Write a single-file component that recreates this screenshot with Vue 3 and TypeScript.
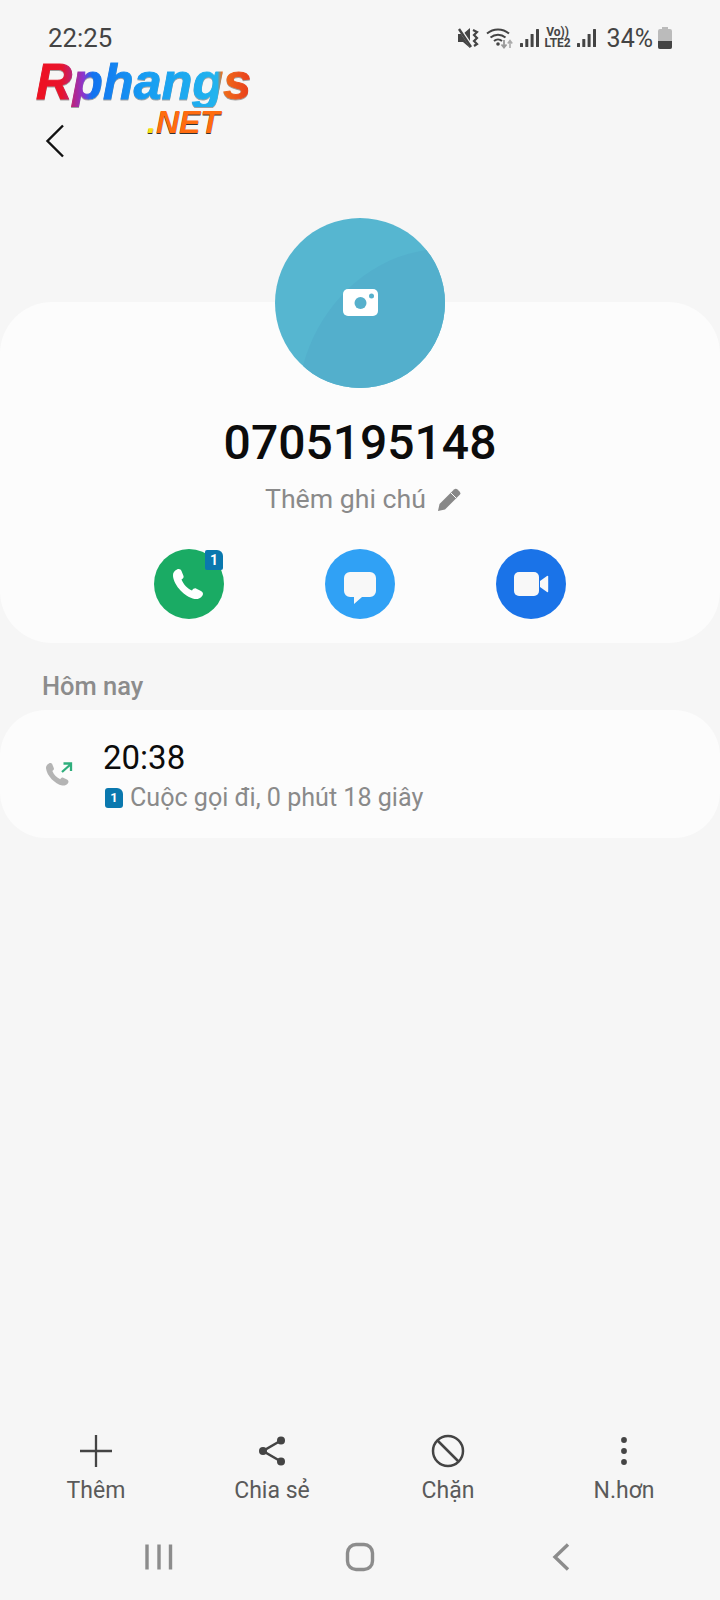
<script setup lang="ts">
// contact detail screen for an unsaved number
const bottomActions = ['add', 'share', 'block', 'more'] as const;
const labels: Record<string, string> = {
  add: 'Thêm',
  share: 'Chia sẻ',
  block: 'Chặn',
  more: 'N.hơn',
};
// handset outline, shared by the call button and the log row
const handset =
  'M23 20.500c2-1 4 0 4.500 1.500l2 5c.5 1.500-.5 2.500-2 3.500c2 5 6 9 10.500 11c1-1.500 2.500-2.500 4-2l5 2.500c2 1 2.500 3 1.500 4.500c-2 3-5 4-8 3.500C31 48 20 37 19 27c-.3-3 1.500-5.500 4-6.500z';
</script>

<template>
  <div class="page">
    <div class="status">
      <span class="clock">22:25</span>
      <div class="status-right">
        <svg class="mute" width="21" height="22" viewBox="0 0 21 22">
          <path d="M0 7h5l7-6v20l-7-6H0z" fill="#444" />
          <path d="M1 1l13 19" stroke="#f6f6f6" stroke-width="3.500" />
          <path d="M1 2l12 18" stroke="#444" stroke-width="2.400" />
          <path d="M15 3l4 2-3 3 3 3-3 3 3 3-3 2" fill="none" stroke="#444" stroke-width="2.200" />
        </svg>
        <svg class="wifi" width="27" height="22" viewBox="0 0 27 22">
          <g fill="none" stroke="#444" stroke-width="1.900">
            <path d="M1 6.500a17 17 0 0 1 22 0" />
            <path d="M4.500 10.500a11.500 11.500 0 0 1 15 0" />
            <path d="M8 14a6 6 0 0 1 8 0" />
          </g>
          <circle cx="12" cy="17" r="1.800" fill="#444" />
          <path d="M18 13v7m-2.500-2.500l2.500 3 2.500-3" fill="none" stroke="#999" stroke-width="1.800" />
          <path d="M24 21v-7m-2.200 2.500l2.200-3 2.200 3" fill="none" stroke="#aaa" stroke-width="1.600" />
        </svg>
        <svg width="19" height="20" viewBox="0 0 19 20">
          <g fill="#444">
            <rect x="0" y="15" width="3" height="4" rx=".6" />
            <rect x="5.300" y="11" width="3" height="8" rx=".6" />
            <rect x="10.600" y="6" width="3" height="13" rx=".6" />
            <rect x="16" y="1" width="3" height="18" rx=".6" />
          </g>
        </svg>
        <div class="volte">
          <span>Vo))</span>
          <span>LTE2</span>
        </div>
        <svg width="19" height="20" viewBox="0 0 19 20">
          <g fill="#444">
            <rect x="0" y="15" width="3" height="4" rx=".6" />
            <rect x="5.300" y="11" width="3" height="8" rx=".6" />
            <rect x="10.600" y="6" width="3" height="13" rx=".6" />
            <rect x="16" y="1" width="3" height="18" rx=".6" />
          </g>
        </svg>
        <span class="percent">34%</span>
        <svg class="battery" width="14" height="22" viewBox="0 0 14 22">
          <path d="M4 0h6v2h2a2 2 0 0 1 2 2v16a2 2 0 0 1-2 2H2a2 2 0 0 1-2-2V4a2 2 0 0 1 2-2h2z" fill="#bbb" />
          <path d="M0 14h14v6a2 2 0 0 1-2 2H2a2 2 0 0 1-2-2z" fill="#444" />
        </svg>
      </div>
    </div>

    <div class="logo">
      <span class="logo-main">Rphangs</span>
      <span class="logo-net"><i>.</i>NET</span>
    </div>

    <div class="toolbar">
      <svg width="20" height="34" viewBox="0 0 20 34">
        <path d="M18 1.500L2.500 17 18 32.500" fill="none" stroke="#111" stroke-width="2.400" />
      </svg>
    </div>

    <section class="card hero">
      <div class="avatar">
        <svg width="170" height="170" viewBox="0 0 170 170">
          <rect width="170" height="170" fill="#56b6d0" />
          <path d="M28 148C44 88 92 40 152 32L170 28V170H28z" fill="#53afcc" />
          <rect x="68" y="71" width="35" height="27" rx="5" fill="#fff" />
          <circle cx="85.500" cy="85" r="6" fill="#56b0cc" />
          <circle cx="96.500" cy="78" r="2.500" fill="#56b0cc" />
        </svg>
      </div>
      <h1 class="number">0705195148</h1>
      <div class="note">
        <span>Thêm ghi chú</span>
        <svg width="24" height="24" viewBox="0 0 24 24">
          <path d="M0 24l1.500-7L16 2.500a2.500 2.500 0 0 1 3.500 0l2 2a2.500 2.500 0 0 1 0 3.500L7 22.500z" fill="#888" />
          <path d="M13 6l5 5" stroke="#fcfcfc" stroke-width="1" />
        </svg>
      </div>
      <div class="actions">
        <div class="action call">
          <svg width="70" height="70" viewBox="0 0 70 70">
            <path :d="handset" fill="#fff" />
          </svg>
          <span class="sim-badge">1</span>
        </div>
        <div class="action message">
          <svg width="70" height="70" viewBox="0 0 70 70">
            <path d="M25 23h20a6 6 0 0 1 6 6v13a6 6 0 0 1-6 6h-8l-8 7v-7h-4a6 6 0 0 1-6-6V29a6 6 0 0 1 6-6z" fill="#f8f8f8" />
          </svg>
        </div>
        <div class="action video">
          <svg width="70" height="70" viewBox="0 0 70 70">
            <rect x="18" y="23" width="25" height="24" rx="5" fill="#f8f8f8" />
            <path d="M44 32l7-5a.8.8 0 0 1 1.200.6v14.800a.8.8 0 0 1-1.200.6l-7-5z" fill="#f8f8f8" />
          </svg>
        </div>
      </div>
    </section>

    <h2 class="day">Hôm nay</h2>

    <section class="card log">
      <svg class="log-icon" width="28" height="28" viewBox="0 0 28 28">
        <path :d="handset" fill="#b4b4b4" transform="translate(-13.250 -13) scale(.75)" />
        <path d="M17 11l9-8M18.500 2.500H26V10" fill="none" stroke="#2fae7c" stroke-width="2.300" />
      </svg>
      <div class="log-text">
        <div class="log-time">20:38</div>
        <div class="log-sub">
          <span class="sim-small">1</span>
          <span>Cuộc gọi đi, 0 phút 18 giây</span>
        </div>
      </div>
    </section>

    <div class="spacer"></div>

    <nav class="bottom">
      <div v-for="item in bottomActions" :key="item" class="bottom-item">
        <svg width="34" height="34" viewBox="0 0 34 34">
          <g v-if="item === 'add'" stroke="#444" stroke-width="2.300">
            <path d="M17 1v32M1 17h32" />
          </g>
          <g v-else-if="item === 'share'" fill="#444">
            <path d="M26 6.500L8 17l18 10.500" fill="none" stroke="#444" stroke-width="2.600" />
            <circle cx="26" cy="6.500" r="4" />
            <circle cx="8" cy="17" r="4" />
            <circle cx="26" cy="27.500" r="4" />
          </g>
          <g v-else-if="item === 'block'" fill="none" stroke="#444" stroke-width="2.500">
            <circle cx="17" cy="17" r="15" />
            <path d="M6.500 6.500l21 21" />
          </g>
          <g v-else fill="#444">
            <circle cx="17" cy="6" r="2.900" />
            <circle cx="17" cy="17" r="2.900" />
            <circle cx="17" cy="28" r="2.900" />
          </g>
        </svg>
        <span>{{ labels[item] }}</span>
      </div>
    </nav>

    <div class="navbar">
      <div class="nav-slot">
        <svg width="28" height="28" viewBox="0 0 28 28">
          <path d="M2 1.500v25M14 1.500v25M25.500 1.500v25" stroke="#8c8c8c" stroke-width="3.400" />
        </svg>
      </div>
      <div class="nav-slot">
        <svg width="30" height="30" viewBox="0 0 30 30">
          <rect x="2.500" y="2.500" width="25" height="25" rx="8.500" fill="none" stroke="#8c8c8c" stroke-width="3.400" />
        </svg>
      </div>
      <div class="nav-slot">
        <svg width="20" height="30" viewBox="0 0 20 30">
          <path d="M17 2.500L4 15l13 12.500" fill="none" stroke="#8c8c8c" stroke-width="3.400" />
        </svg>
      </div>
    </div>
  </div>
</template>

<style scoped>
.page {
  position: relative;
  width: 720px;
  height: 1600px;
  background: #f6f6f6;
  display: flex;
  flex-direction: column;
  font-family: Roboto, 'Noto Sans', sans-serif;
  overflow: hidden;
}

.status {
  height: 76px;
  padding: 0 48px;
  display: flex;
  align-items: center;
  justify-content: space-between;
  color: #444;
}

.clock {
  font-size: 25.800px;
}

.status-right {
  display: flex;
  align-items: center;
  gap: 7px;
}

.volte {
  display: flex;
  flex-direction: column;
  align-items: center;
  font-size: 12px;
  font-weight: 700;
  line-height: 11.500px;
  width: 26px;
  margin: 0 -1px;
}

.percent {
  font-size: 25px;
  margin-left: 4px;
  margin-right: -2px;
}

/* watermark sits over the status bar and toolbar */
.logo {
  position: absolute;
  left: 36px;
  top: 57px;
  width: 216px;
  font-family: 'Liberation Sans', Arial, sans-serif;
  font-weight: 700;
  font-style: italic;
}

.logo-main {
  display: block;
  font-size: 50px;
  line-height: 50px;
  letter-spacing: 0.200px;
  background: linear-gradient(90deg, #ef1020 0%, #e8142c 12%, #8a35d0 22%, #1272f0 26%, #169cf2 50%, #22b4ee 84%, #f0701a 86%, #e83a1c 100%);
  -webkit-background-clip: text;
  background-clip: text;
  color: transparent;
  -webkit-text-stroke: 1px transparent;
  filter: drop-shadow(0 1px 0 rgba(0, 0, 0, 0.35));
}

.logo-net {
  position: absolute;
  left: 111px;
  top: 51px;
  font-size: 32px;
  line-height: 28px;
  color: #ff6c10;
  text-shadow: 0 1px 0 #333;
}

.logo-net i {
  color: #f6e010;
}

.toolbar {
  height: 142px;
  padding: 48px 0 0 45px;
  box-sizing: border-box;
}

.toolbar svg {
  display: block;
}

.card {
  background: #fcfcfc;
}

.hero {
  margin-top: 84px;
  height: 341px;
  border-radius: 52px;
  display: flex;
  flex-direction: column;
  align-items: center;
}

.avatar {
  margin-top: -84px;
  width: 170px;
  height: 170px;
  margin-left: -1px;
  border-radius: 50%;
  overflow: hidden;
  flex: none;
}

.avatar svg {
  display: block;
}

.number {
  margin: 25px 0 0;
  font-size: 48px;
  line-height: 60px;
  font-weight: 500;
  color: #0c0c0c;
}

.note {
  margin: 8px 0 0 7px;
  height: 36px;
  display: flex;
  align-items: center;
  gap: 12px;
  font-size: 26.700px;
  color: #8a8a8a;
}

.actions {
  margin-top: 32px;
  display: flex;
  gap: 101px;
}

.action {
  position: relative;
  width: 70px;
  height: 70px;
  border-radius: 50%;
}

.action svg {
  display: block;
}

.call {
  background: #1aab64;
}

.message {
  background: #30a1f5;
}

.video {
  background: #1a73e8;
}

.sim-badge {
  position: absolute;
  top: 1px;
  right: 1px;
  width: 18px;
  height: 20px;
  background: #0a78ae;
  border-radius: 2px;
  border-top-right-radius: 6px;
  color: #fff;
  font-size: 14px;
  font-weight: 700;
  line-height: 20px;
  text-align: center;
}

.day {
  margin: 28px 0 0 42px;
  font-size: 25.500px;
  line-height: 30px;
  font-weight: 500;
  color: #8c8c8c;
}

.log {
  margin-top: 9px;
  height: 128px;
  border-radius: 46px;
  display: flex;
  align-items: center;
  box-sizing: border-box;
  padding-left: 45px;
}

.log-icon {
  flex: none;
  margin-top: 1px;
}

.log-text {
  margin: 4px 0 0 32px;
}

.log-time {
  margin-left: -2px;
  font-size: 33px;
  line-height: 40px;
  color: #0c0c0c;
}

.log-sub {
  display: flex;
  align-items: center;
  gap: 7px;
  margin-top: 3px;
  font-size: 25.100px;
  line-height: 34px;
  color: #8a8a8a;
}

.sim-small {
  width: 18px;
  height: 20px;
  background: #0a78ae;
  border-radius: 3px;
  border-top-right-radius: 6px;
  color: #fff;
  font-size: 13px;
  font-weight: 700;
  line-height: 20px;
  text-align: center;
}

.spacer {
  flex: 1;
}

.bottom {
  padding: 0 8px;
  display: grid;
  grid-template-columns: repeat(4, 1fr);
}

.bottom-item {
  display: flex;
  flex-direction: column;
  align-items: center;
  gap: 8px;
  font-size: 23px;
  line-height: 30px;
  color: #5a5a5a;
}

.bottom-item svg {
  display: block;
}

.navbar {
  height: 80px;
  margin-top: 14px;
  padding-bottom: 7px;
  box-sizing: border-box;
  display: flex;
  justify-content: center;
  align-items: center;
}

.nav-slot {
  width: 201px;
  display: flex;
  justify-content: center;
}

.nav-slot svg {
  display: block;
}
</style>
